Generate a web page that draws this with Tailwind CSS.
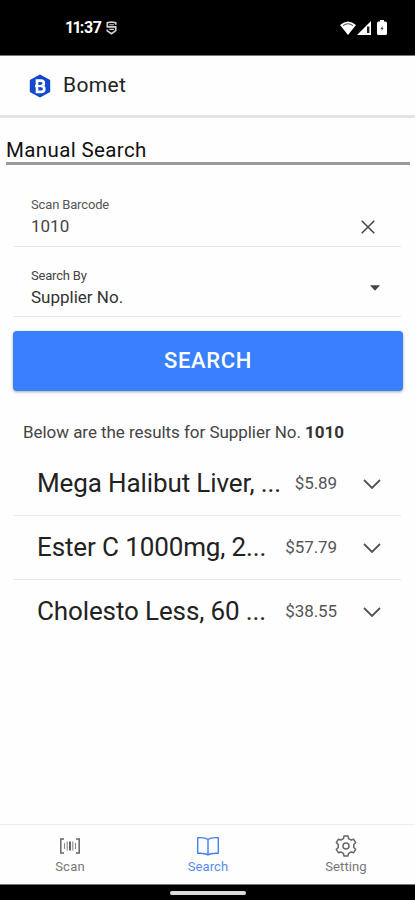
<!DOCTYPE html>
<html lang="en">
<head>
<meta charset="utf-8">
<title>Bomet</title>
<script src="https://cdn.jsdelivr.net/npm/@tailwindcss/browser@4"></script>
</head>
<body class="bg-white">
<div class="w-[415px] h-[900px] flex flex-col overflow-hidden bg-[#fefefe] font-['Roboto',sans-serif] text-[#222]">
  <div class="h-[56px] shrink-0 bg-black border-b border-[#777] flex items-center pl-[65px] pr-[28px] text-white">
    <span class="text-[16px] font-bold leading-none tracking-[-1.8px] w-[41px] whitespace-nowrap">11<span class="tracking-[-0.3px]">:37</span></span>
    <svg class="w-[11px] h-[14px]" viewBox="0 0 12 15" fill="none" stroke="#d4d4d4" stroke-width="1.8"><path d="M10.6 4V1.8L6 1 1.4 1.8v4.4h9.2v4.2L6 13.7 1.4 10.6V9"/><path d="M3.6 3.9h5M3.6 9h5" stroke-width="1.2"/></svg>
    <svg class="ml-auto w-[16px] h-[14px]" viewBox="0 0 16 14"><path d="M0 4Q8-3 16 4L8 14Z" fill="#fff"/><path d="M3 4.6Q8 1 13 4.6" stroke="#555" stroke-width="1.1" fill="none"/></svg>
    <svg class="ml-[1px] w-[14px] h-[14px]" viewBox="0 0 14 14"><path d="M14 0v14H0Z" fill="#fff"/><path d="M10 5.5h2.4v6.5H10Z" fill="#222"/></svg>
    <svg class="ml-[6px] w-[10px] h-[15px]" viewBox="0 0 10 15"><path d="M3 0h4v1.6h1.4Q10 1.6 10 3.2v10.2q0 1.6-1.6 1.6H1.6Q0 15 0 13.4V3.2q0-1.6 1.6-1.6H3Z" fill="#fff"/><path d="M5.5 6 3.500 9h1.300L4.600 11 6.500 8.200H5.300Z" fill="#333"/></svg>
  </div>
  <header class="h-[62px] shrink-0 border-b-[3px] border-[#e3e3e3] flex items-center pl-[29px]">
    <svg class="w-[22px] h-[24px]" viewBox="0 0 22 24"><path d="M11 .5 21.2 6v12L11 23.5.8 18V6Z" fill="#1248cc"/><path d="M8 6.600h3.800q3 0 3 2.600 0 2.500-2.600 2.800 3.100.300 3.100 2.900 0 2.900-3.400 2.900H8Z" fill="none" stroke="#fff" stroke-width="2.700"/><path d="M6 12h7" stroke="#fff" stroke-width="2.200"/></svg>
    <h1 class="ml-[12px] text-[21px] leading-none tracking-[0.35px]">Bomet</h1>
  </header>
  <main class="flex-1 flex flex-col">
    <h2 class="mr-[5px] ml-[6px] mt-[18px] h-[29px] border-b-[3px] border-[#9b9b9b] pt-[2px] text-[20.5px] leading-[24px] tracking-[0.37px] text-[#111]">Manual Search</h2>
    <div class="mx-[14px] mt-[28px] h-[54px] border-b-[1.5px] border-[#e6e6e6] pl-[17px] pr-[26px] flex justify-between">
      <div>
        <div class="text-[13px] leading-[20px] tracking-[-0.15px] pt-[2px] text-[#555]">Scan Barcode</div>
        <div class="text-[17px] leading-[22px] text-[#444]">1010</div>
      </div>
      <svg class="mt-[27px] w-[14px] h-[14px]" viewBox="0 0 14 14" stroke="#444" stroke-width="1.5"><path d="m.7.7 12.6 12.6M13.3.7.7 13.3"/></svg>
    </div>
    <div class="mx-[14px] mt-[16px] h-[54px] border-b-[1.5px] border-[#e6e6e6] pl-[17px] pr-[21px] flex justify-between">
      <div>
        <div class="text-[13px] leading-[20px] tracking-[-0.2px] pt-[3px] text-[#444]">Search By</div>
        <div class="text-[17px] leading-[22px] text-[#333]">Supplier No.</div>
      </div>
      <svg class="mt-[22px] w-[10px] h-[6px]" viewBox="0 0 10 6"><path d="M0 .3h10L5 5.7Z" fill="#444"/></svg>
    </div>
    <button class="mx-[13px] w-[390px] mt-[14px] h-[60px] shrink-0 rounded-[4px] bg-[#3880ff] shadow-[0_1px_3px_rgba(0,0,0,0.35)] text-white text-[22px] leading-none font-medium tracking-[0.65px]">SEARCH</button>
    <p class="ml-[23px] mt-[31px] text-[17px] leading-[20px] tracking-[-0.05px] text-[#444] whitespace-nowrap">Below are the results for Supplier No. <b class="font-bold text-[#333]">1010</b></p>
    <div class="mx-[14px] mt-[10px]">
      <div class="h-[64px] border-b-[1.5px] border-[#e9e9e9] flex items-center pl-[23px] pr-[20px]">
        <span class="text-[26px] tracking-[-0.12px] whitespace-nowrap">Mega Halibut Liver, ...</span>
        <span class="ml-auto text-[17px] tracking-[-0.1px] text-[#555]">$5.89</span>
        <svg class="ml-[26px] w-[18px] h-[10px]" viewBox="0 0 18 10" fill="none" stroke="#555" stroke-width="1.8"><path d="m1 1 8 8 8-8"/></svg>
      </div>
      <div class="h-[64px] border-b-[1.5px] border-[#e6e6e6] flex items-center pl-[23px] pr-[20px]">
        <span class="text-[26px] tracking-[-0.12px] whitespace-nowrap">Ester C 1000mg, 2...</span>
        <span class="ml-auto text-[17px] tracking-[-0.1px] text-[#555]">$57.79</span>
        <svg class="ml-[26px] w-[18px] h-[10px]" viewBox="0 0 18 10" fill="none" stroke="#555" stroke-width="1.8"><path d="m1 1 8 8 8-8"/></svg>
      </div>
      <div class="h-[63px] flex items-center pl-[23px] pr-[20px]">
        <span class="text-[26px] tracking-[-0.12px] whitespace-nowrap">Cholesto Less, 60 ...</span>
        <span class="ml-auto text-[17px] tracking-[-0.1px] text-[#555]">$38.55</span>
        <svg class="ml-[26px] w-[18px] h-[10px]" viewBox="0 0 18 10" fill="none" stroke="#555" stroke-width="1.8"><path d="m1 1 8 8 8-8"/></svg>
      </div>
    </div>
  </main>
  <nav class="h-[60px] shrink-0 border-t border-[#eee] grid grid-cols-3 pl-px text-[13px] leading-[16px] text-[#777]">
    <div class="flex flex-col items-center pt-[10px]">
      <svg class="w-[22px] h-[22px]" viewBox="0 0 22 22" fill="none" stroke="#666" stroke-width="1.5"><path d="M5 4H1.8v14H5M17 4h3.2v14H17"/><path d="M11 6.5v9" stroke-width="2"/><path d="M8.2 6.5v9M13.8 6.5v9M5.5 8v6M16.5 8v6" stroke="#888" stroke-width="1.1"/></svg>
      <span class="mt-[2px] tracking-[0.2px]">Scan</span>
    </div>
    <div class="flex flex-col items-center pt-[10px] text-[#5a8cf0]">
      <svg class="w-[24px] h-[22px]" viewBox="0 0 24 22" fill="none" stroke="#4680ee" stroke-width="1.4" stroke-linejoin="round"><path d="M12 4.500Q9 2.200 1.700 2.700v15.600Q9 17.800 12 20 15 17.800 22.300 18.300V2.700Q15 2.200 12 4.500ZM12 4.500V20"/></svg>
      <span class="mt-[2px] tracking-[0.1px]">Search</span>
    </div>
    <div class="flex flex-col items-center pt-[10px]">
      <svg class="w-[22px] h-[22px]" viewBox="-11 -11 22 22" fill="none" stroke="#666" stroke-width="1.5" stroke-linejoin="round"><circle r="3"/><path d="M-2.570-7.470-1.950-10.010H1.950L2.570-7.470 5.180-5.960 7.690-6.690 9.640-3.320 7.750-1.510V1.510L9.640 3.320 7.690 6.690 5.180 5.960 2.570 7.470 1.950 10.010H-1.950L-2.570 7.470-5.180 5.960-7.690 6.690-9.640 3.320-7.750 1.510V-1.510L-9.640-3.320-7.690-6.690-5.180-5.960Z"/></svg>
      <span class="mt-[2px] tracking-[0.1px]">Setting</span>
    </div>
  </nav>
  <div class="h-[16px] shrink-0 bg-black border-t border-[#777] flex justify-center pt-[6px]"><div class="w-[76px] h-[4px] rounded-full bg-[#ddd]"></div></div>
</div>
</body>
</html>
